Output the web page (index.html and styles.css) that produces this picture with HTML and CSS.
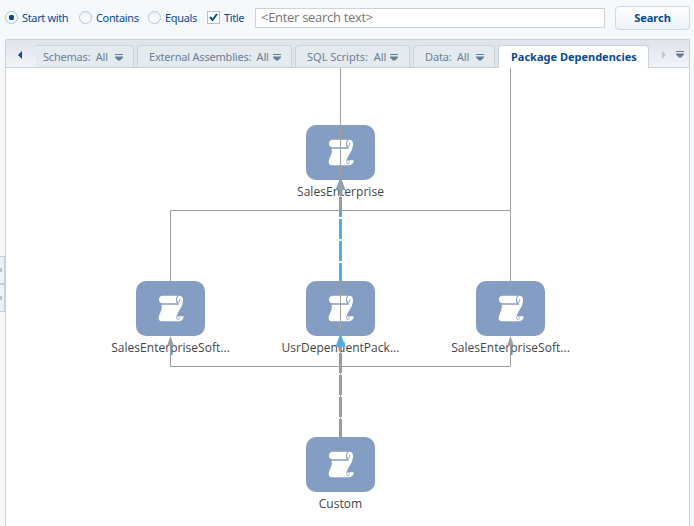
FILE: index.html
```html
<!DOCTYPE html>
<html lang="en">
<head>
<meta charset="utf-8">
<title>Package Dependencies</title>
<link rel="stylesheet" href="styles.css">
</head>
<body>
<svg class="defs" width="0" height="0">
  <symbol id="scroll" viewBox="0 0 27 27">
    <path fill="#fff" d="M5.500 .8H20.500C18.600 2.500 18.600 6 20 8.300H5.500C.8 8.300 .8 .8 5.500 .8Z"/>
    <path fill="#fff" d="M4.500 9.800H21.500C23.500 8 24.500 8 25.300 8.500C25.300 11 23.800 12.500 22.800 14.500C21.500 17 20 19 19.500 21.500C19 24 20.200 25.500 22 26.200H4.500C1.200 26 1.200 22.500 2.500 19.500C4 16 5.500 14 4.500 9.800Z"/>
    <path fill="#fff" d="M22.800 .8C26 .8 26.800 5.500 25.300 9L22 9.300C20.200 7 19.300 5 20 2.800C20.500 1.400 21.600 .8 22.800 .8Z"/>
    <path fill="none" stroke="#839dc3" stroke-width=".9" d="M21 1.200C18.800 3 19.200 6 21 7.800C22.500 7 23 5.500 22.700 4"/>
    <path fill="#fff" d="M20.500 21.300H26.700C26.500 24.500 24.500 26.200 22 26.200C19.500 25.500 19 23 20.500 21.300Z"/>
    <path fill="none" stroke="#839dc3" stroke-width=".8" d="M20.500 21.700C22.300 21.500 23 23 21.800 24.300C20.800 25 19.800 24.300 19.700 23.300"/>
  </symbol>
  <symbol id="drop" viewBox="0 0 8 7"><path fill="#647e98" d="M0 0H8V1H0ZM0 2.500H8V3.500L5 6.500H3L0 3.500Z"/></symbol>
</svg>
<form class="search">
  <span class="radio on"></span><label class="l1">Start with</label>
  <span class="radio"></span><label class="l2">Contains</label>
  <span class="radio"></span><label class="l3">Equals</label>
  <span class="check"><svg width="9" height="9" viewBox="0 0 9 9"><path d="M1 4L3.500 7L8 1" fill="none" stroke="#074a98" stroke-width="2"/></svg></span><label class="l4">Title</label>
  <span class="field">&lt;Enter search text&gt;</span>
  <button type="button">Search</button>
</form>
<main class="panel">
  <nav class="tabs">
    <span class="prev"><svg width="4" height="8" viewBox="0 0 4 8"><path fill="#074a98" d="M4 0V8L0 4Z"/></svg></span>
    <span class="tab schemas"><span>Schemas:&nbsp; All</span><svg width="8" height="7"><use href="#drop"/></svg></span>
    <span class="tab assemblies"><span>External Assemblies:&nbsp; All</span><svg width="8" height="7"><use href="#drop"/></svg></span>
    <span class="tab sql"><span>SQL Scripts:&nbsp; All</span><svg width="8" height="7"><use href="#drop"/></svg></span>
    <span class="tab data"><span>Data:&nbsp; All</span><svg width="8" height="7"><use href="#drop"/></svg></span>
    <span class="tab active">Package Dependencies</span>
    <span class="next"><svg width="4" height="8" viewBox="0 0 4 8"><path fill="#b8c9dc" d="M0 0V8L4 4Z"/></svg><svg width="8" height="7"><use href="#drop"/></svg></span>
  </nav>
  <div class="canvas">
    <div class="node n1"><div class="box"><svg width="27" height="27"><use href="#scroll"/></svg></div><span>SalesEnterprise</span></div>
    <div class="node n2"><div class="box"><svg width="27" height="27"><use href="#scroll"/></svg></div><span>SalesEnterpriseSoft...</span></div>
    <div class="node n3"><div class="box"><svg width="27" height="27"><use href="#scroll"/></svg></div><span>UsrDependentPack...</span></div>
    <div class="node n4"><div class="box"><svg width="27" height="27"><use href="#scroll"/></svg></div><span>SalesEnterpriseSoft...</span></div>
    <div class="node n5"><div class="box"><svg width="27" height="27"><use href="#scroll"/></svg></div><span>Custom</span></div>
    <svg class="links" width="683" height="458" viewBox="6 68 683 458">
      <path class="flow" d="M340.500 281V186M340.500 437V342"/>
      <path class="line" d="M340.500 68V211M340.500 281V437M510.500 68V281M170.500 281V210.500H510.500M170.500 344V366.500H510.500V344"/>
      <path fill="#56a9e8" d="M340.500 177L345.500 190H335.500ZM340.500 333L345.500 347H335.500Z"/>
      <path fill="#a0a0a0" d="M340.500 179L344.500 190H336.500ZM170.500 336L174 346H167ZM510.500 336L514 346H507Z"/>
    </svg>
  </div>
</main>
<aside class="splitter"><i></i><i></i></aside>
</body>
</html>
```
FILE: styles.css
```css
* { box-sizing: border-box; }
body { margin: 0; width: 694px; height: 526px; overflow: hidden; background: #f5f9fb; font: 11px "Noto Sans", sans-serif; color: #074a98; }
svg { display: block; flex: none; }
.defs { position: absolute; }
.search { display: flex; align-items: center; height: 39px; padding: 0 4px 4px 5px; }
.search label { margin-left: 4px; white-space: nowrap; flex: none; letter-spacing: -.35px; }
.l1 { width: 57px; } .l2 { width: 52px; } .l3 { width: 42px; } .l4 { width: 27px; }
.radio { width: 13px; height: 13px; flex: none; border: 1px solid #adc5df; border-radius: 50%; background: linear-gradient(#eef3f8, #fff); }
.on { background: radial-gradient(circle, #074a98 0 2.500px, #f8fbfd 3px); }
.check { width: 13px; height: 13px; flex: none; border: 1px solid #b6bfca; background: #fff; padding: 1px; }
.field { width: 350px; height: 20px; margin: 0 10px 0 4px; padding-left: 5px; border: 1px solid #ced3d8; background: #fff; color: #777; font: 13px/17px "Open Sans", sans-serif; letter-spacing: -.4px; letter-spacing: -.3px; flex: none; }
button { width: 75px; height: 24px; padding: 0; border: 1px solid #cad8e9; border-radius: 4px; background: linear-gradient(#fff, #edf2f8); color: #074a98; font: bold 11px "Noto Sans", sans-serif; flex: none; }
.panel { margin-left: 5px; width: 685px; height: 487px; border: 1px solid #cdd2d8; border-bottom: 0; border-radius: 2px 2px 0 0; background: #fff; }
.tabs { display: flex; height: 28px; padding-top: 5px; background: #e0e4eb; border-bottom: 1px solid #cdd2d8; }
.tab { display: flex; align-items: center; justify-content: space-between; height: 22px; margin-right: 3px; padding: 0 10px 1px 11px; border: 1px solid #cad2dc; border-bottom: 0; border-radius: 4px 4px 0 0; background: #e5eaef; color: #6c8097; white-space: nowrap; letter-spacing: -.15px; flex: none; }
.tab svg { margin-top: 3px; }
.prev { width: 30px; height: 27px; margin-top: -5px; background: linear-gradient(#e0e4eb, #f0f3f8); padding: 11px 0 0 12px; flex: none; }
.schemas { width: 98px; border-left: 0; border-radius: 0 4px 0 0; padding-left: 7px; letter-spacing: -.2px; }
.assemblies { width: 155px; letter-spacing: -.2px; } .sql { width: 115px; padding-right: 11px; letter-spacing: 0; } .data { width: 82px; padding-right: 10px; }
.active { width: 151px; height: 23px; padding: 0 0 1px 12px; background: #fff; color: #074a98; font-weight: bold; margin-right: 0; letter-spacing: 0; }
.next { display: flex; flex: 1; align-items: flex-start; gap: 10px; height: 27px; margin-top: -5px; padding: 11px 0 0 13px; background: linear-gradient(#e0e4eb, #f0f3f8); }
.canvas { position: relative; height: 458px; overflow: hidden; }
.links { position: absolute; left: 0; top: 0; }
.line { fill: none; stroke: #a0a0a0; }
.flow { fill: none; stroke: #56a9e8; stroke-width: 3; stroke-dasharray: 20 2; stroke-dashoffset: 2; }
.node { position: absolute; width: 139px; display: flex; flex-direction: column; align-items: center; color: #444; font: 12px/17px "Open Sans", sans-serif; letter-spacing: .03px; white-space: nowrap; }
.box { width: 69px; height: 55px; border-radius: 10px; background: #839dc3; display: grid; place-items: center; margin-bottom: 3px; }
.n1 { left: 265px; top: 57px; } .n2 { left: 95px; top: 213px; } .n3 { left: 265px; top: 213px; } .n4 { left: 435px; top: 213px; } .n5 { left: 265px; top: 369px; }
.splitter { position: absolute; left: 0; top: 256px; width: 5px; }
.splitter i { display: block; height: 28px; border: 1px solid #c7cfd9; border-left: 0; background: linear-gradient(#b9c4d1, #b9c4d1) 0 50% / 2px 4px no-repeat #eef2f6; }
```
